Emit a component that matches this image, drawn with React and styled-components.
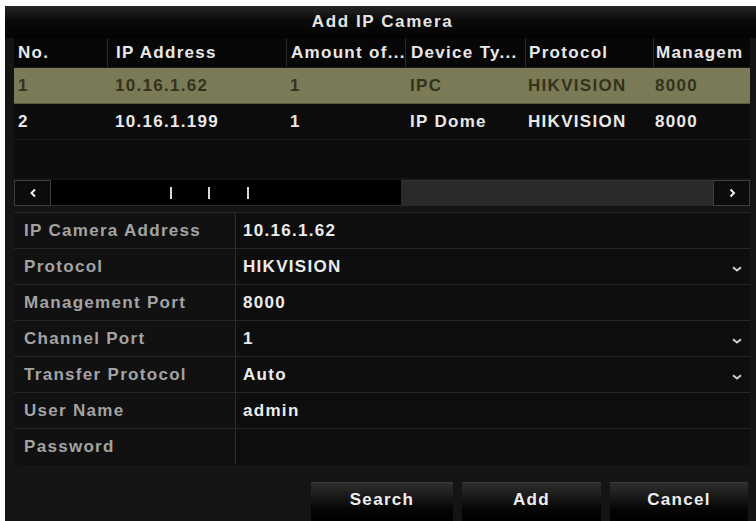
import React from "react";
import styled, { createGlobalStyle } from "styled-components";

const Global = createGlobalStyle`
  html, body { margin: 0; padding: 0; background: #ffffff; }
  body { font-family: "Liberation Sans", Arial, sans-serif; }
`;

const Page = styled.div`
  padding: 6px 0 0 5px;
`;

const Panel = styled.div`
  width: 751px;
  height: 515px;
  background: #141414;
  display: flex;
  flex-direction: column;
  overflow: hidden;
  font-family: "Liberation Sans", Arial, sans-serif;
  font-weight: 700;
  font-size: 17px;
  letter-spacing: 1.3px;
`;

const TitleBar = styled.div`
  height: 32px;
  flex: none;
  display: flex;
  align-items: center;
  justify-content: center;
  color: #e4e4e4;
  background: linear-gradient(#262626 0%, #0a0a0a 45%, #030303 100%);
  padding-left: 4px;
  letter-spacing: 1.6px;
`;

const Body = styled.div`
  display: flex;
  flex-direction: column;
  margin: 0 6px 0 9px;
`;

const Table = styled.div`
  display: flex;
  flex-direction: column;
  background: #0c0c0c;
`;

const Row = styled.div`
  display: grid;
  grid-template-columns: 93px 179px 119px 120px 128px 97px;
  height: ${(p) => p.$h}px;
  background: ${(p) => (p.$selected ? "#7b7a56" : p.$header ? "#070707" : "#0c0c0c")};
  color: ${(p) => (p.$selected ? "#33321b" : "#e8e8e8")};
  border-bottom: 1px solid ${(p) => (p.$selected ? "#5c5b40" : "#1a1a1a")};
  box-sizing: border-box;
`;

const Cell = styled.div`
  display: flex;
  align-items: center;
  padding-left: ${(p) => p.$pad}px;
  white-space: nowrap;
  overflow: hidden;
  border-left: ${(p) => (p.$divider ? "1px solid #2a2a2a" : "none")};
`;

const Empty = styled.div`
  height: 38px;
  background: #0c0c0c;
`;

const ScrollBar = styled.div`
  margin-top: 2px;
  height: 26px;
  display: flex;
  background: #121212;
`;

const ScrollButton = styled.div`
  width: 37px;
  flex: none;
  box-sizing: border-box;
  border: 1px solid #3e3e3e;
  background: #0c0c0c;
  display: flex;
  align-items: center;
  justify-content: center;
`;

const Thumb = styled.div`
  width: 350px;
  flex: none;
  background: #000;
  border-bottom: 1px solid #2c2c2c;
  box-sizing: border-box;
  display: flex;
  align-items: center;
`;

const Tick = styled.div`
  width: 2px;
  height: 12px;
  background: #d8d8d8;
  margin-left: ${(p) => p.$ml}px;
`;

const Track = styled.div`
  flex: 1;
  background: #2a2a2a;
  border-top: 1px solid #333;
`;

const Form = styled.div`
  margin-top: 6px;
  display: flex;
  flex-direction: column;
  background: #0e0e0e;
  border-top: 1px solid #262626;
  border-radius: 0 0 0 6px;
  overflow: hidden;
`;

const FormRow = styled.div`
  display: grid;
  grid-template-columns: 222px 1fr;
  height: 36px;
  border-bottom: 1px solid ${(p) => (p.$last ? "transparent" : "#262626")};
  box-sizing: border-box;
`;

const Label = styled.div`
  display: flex;
  align-items: center;
  padding-left: 10px;
  color: #a3a3a3;
  background: #111111;
  border-right: 1px solid #2c2c2c;
  white-space: nowrap;
`;

const Value = styled.div`
  display: flex;
  align-items: center;
  justify-content: space-between;
  padding: 0 8px 0 7px;
  color: #ececec;
  background: #0e0e0e;
`;

const Chevron = styled.svg`
  width: 10px;
  height: 6px;
  margin-top: 4px;
`;

const Buttons = styled.div`
  margin-top: auto;
  display: flex;
  justify-content: flex-end;
  gap: 9px;
  padding-right: 8px;
  height: 39px;
`;

const Button = styled.div`
  width: ${(p) => p.$w}px;
  box-sizing: border-box;
  display: flex;
  align-items: center;
  justify-content: center;
  color: #eeeeee;
  background: linear-gradient(#2e2e2e 0%, #1a1a1a 35%, #050505 70%, #000 100%);
  border-top: 1px solid #3a3a3a;
  padding-bottom: 4px;
`;

const columns = [
  { title: "No.", pad: 4 },
  { title: "IP Address", pad: 8 },
  { title: "Amount of...", pad: 4 },
  { title: "Device Ty...", pad: 5 },
  { title: "Protocol", pad: 3 },
  { title: "Managem", pad: 2 },
];

const rows = [
  ["1", "10.16.1.62", "1", "IPC", "HIKVISION", "8000"],
  ["2", "10.16.1.199", "1", "IP Dome", "HIKVISION", "8000"],
];

const fields = [
  { label: "IP Camera Address", value: "10.16.1.62" },
  { label: "Protocol", value: "HIKVISION", select: true },
  { label: "Management Port", value: "8000" },
  { label: "Channel Port", value: "1", select: true },
  { label: "Transfer Protocol", value: "Auto", select: true },
  { label: "User Name", value: "admin" },
  { label: "Password", value: "" },
];

const Down = () => (
  <Chevron viewBox="0 0 10 6">
    <path d="M1 1.2 L5 4.5 L9 1.2" fill="none" stroke="#cfcfcf" strokeWidth="2" />
  </Chevron>
);

export default function App() {
  return (
    <>
      <Global />
      <Page>
        <Panel>
          <TitleBar>Add IP Camera</TitleBar>
          <Body>
            <Table>
              <Row $header $h={30}>
                {columns.map((c, i) => (
                  <Cell key={c.title} $pad={c.pad} $divider={i > 0}>
                    {c.title}
                  </Cell>
                ))}
              </Row>
              {rows.map((r, ri) => (
                <Row key={ri} $h={36} $selected={ri === 0}>
                  {r.map((v, i) => (
                    <Cell key={i} $pad={columns[i].pad}>
                      {v}
                    </Cell>
                  ))}
                </Row>
              ))}
              <Empty />
            </Table>
            <ScrollBar>
              <ScrollButton>
                <svg width="8" height="10" viewBox="0 0 8 10">
                  <path d="M6 1.5 L2.5 5 L6 8.5" fill="none" stroke="#f0f0f0" strokeWidth="2" />
                </svg>
              </ScrollButton>
              <Thumb>
                <Tick $ml={119} />
                <Tick $ml={36} />
                <Tick $ml={37} />
              </Thumb>
              <Track />
              <ScrollButton>
                <svg width="8" height="10" viewBox="0 0 8 10">
                  <path d="M2.5 1.5 L6 5 L2.5 8.5" fill="none" stroke="#f0f0f0" strokeWidth="2" />
                </svg>
              </ScrollButton>
            </ScrollBar>
            <Form>
              {fields.map((f, i) => (
                <FormRow key={f.label} $last={i === fields.length - 1}>
                  <Label>{f.label}</Label>
                  <Value>
                    <span>{f.value}</span>
                    {f.select && <Down />}
                  </Value>
                </FormRow>
              ))}
            </Form>
          </Body>
          <Buttons>
            <Button $w={142}>Search</Button>
            <Button $w={139}>Add</Button>
            <Button $w={138}>Cancel</Button>
          </Buttons>
        </Panel>
      </Page>
    </>
  );
}
